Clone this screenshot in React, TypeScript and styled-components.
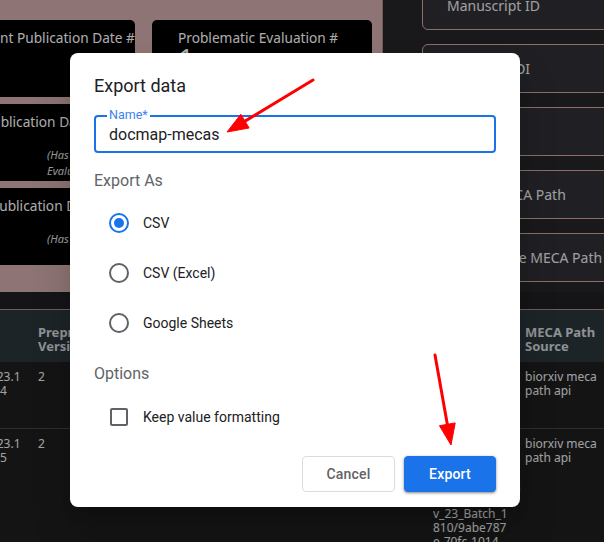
import React from 'react'
import styled, { createGlobalStyle } from 'styled-components'

const GlobalStyle = createGlobalStyle`
  html, body {
    margin: 0;
    padding: 0;
    background: #1e1e20;
  }
  body {
    font-family: 'Noto Sans', 'Open Sans', sans-serif;
    overflow: hidden;
  }
`

const Page = styled.div`
  position: relative;
  width: 604px;
  height: 542px;
  overflow: hidden;
  background: #1e1e20;
`

const Top = styled.div`
  display: flex;
  height: 292px;
`

const CardPanel = styled.div`
  flex: 0 0 457px;
  margin-left: -75px;
  box-sizing: border-box;
  padding: 20px 10px 0;
  background: #d1abab;
  display: grid;
  grid-template-columns: 200px 220px;
  grid-auto-rows: 77px;
  gap: 7px 17px;
`

const Card = styled.div`
  background: #000;
  border-radius: 5px;
  padding: 8px 26px 0;
  overflow: hidden;
  color: #fff;
`

const CardTitle = styled.div`
  font-size: 13.7px;
  line-height: 19px;
  white-space: nowrap;
`

const CardBody = styled.div`
  display: grid;
  grid-template-columns: 86px 1fr;
`

const CardValue = styled.div`
  font-size: 28px;
  line-height: 28px;
  margin-top: -3px;
`

const CardNote = styled.div`
  align-self: center;
  padding-top: 16px;
  font-size: 11px;
  line-height: 16px;
  font-style: italic;
  color: #e0e0e0;
`

const FieldPanel = styled.div`
  flex: 1;
  background: #262629;
  border-left: 1px solid #a2897f;
  padding-left: 39px;
  display: flex;
  flex-direction: column;
  gap: 14px;
`

const FieldBox = styled.div`
  flex: 0 0 49px;
  box-sizing: border-box;
  margin-right: -20px;
  border: 1px solid #cfa396;
  border-radius: 6px;
  background: #2e2f35;
  display: flex;
  align-items: center;
  padding-left: 24px;
  font-size: 14px;
  color: #ebebeb;
  white-space: nowrap;
  &:first-child {
    margin-top: -19px;
  }
`

const TableWrap = styled.div`
  padding-top: 17px;
  background: #202023;
`

const Grid = styled.div`
  display: grid;
  grid-template-columns: 55px 80px 315px 92px 1fr;
  margin-left: -17px;
`

const HeaderRow = styled(Grid)`
  height: 53px;
  box-sizing: border-box;
  align-items: center;
  background: #2b353a;
  border-top: 1px solid #a2897f;
  font-size: 13px;
  font-weight: 700;
  line-height: 14px;
  color: #d1d8dd;
`

const BodyRow = styled(Grid)`
  min-height: 66px;
  align-items: start;
  background: #1e1e20;
  border-bottom: 1px solid #444447;
  font-size: 12px;
  line-height: 14px;
  color: #eeeeee;
`

const Cell = styled.div`
  padding: 8px 8px 2px 0;
  overflow: hidden;
`

const Line = styled.span`
  display: block;
  white-space: nowrap;
`

const Backdrop = styled.div`
  position: absolute;
  inset: 0;
  background: rgba(0, 0, 0, 0.32);
`

const Dialog = styled.div`
  position: absolute;
  left: 70px;
  top: 53px;
  width: 450px;
  box-sizing: border-box;
  padding: 21px 24px 15px;
  background: #fff;
  border-radius: 8px;
  box-shadow: 0 11px 15px -7px rgba(0, 0, 0, 0.2), 0 24px 38px 3px rgba(0, 0, 0, 0.14);
  font-family: Roboto, 'Noto Sans', sans-serif;
  color: #202124;
`

const DialogTitle = styled.div`
  font-size: 18px;
  line-height: 24px;
`

const NameField = styled.div`
  position: relative;
  margin-top: 17px;
  height: 38px;
  box-sizing: border-box;
  border: 2px solid #1a73e8;
  border-radius: 4px;
  padding: 0 13px;
  display: flex;
  align-items: center;
  font-size: 16px;
`

const FloatLabel = styled.span`
  position: absolute;
  left: 11px;
  top: -9px;
  padding: 0 2px;
  background: #fff;
  font-size: 12.5px;
  line-height: 14px;
  color: #3b82f0;
`

const SectionLabel = styled.div<{ $gap: number }>`
  margin-top: ${p => p.$gap}px;
  font-size: 16px;
  line-height: 24px;
  color: #5f6368;
`

const OptionList = styled.div<{ $gap: number }>`
  margin-top: ${p => p.$gap}px;
  display: flex;
  flex-direction: column;
`

const OptionRow = styled.label`
  height: 50px;
  display: flex;
  align-items: center;
  gap: 14px;
  padding-left: 15px;
  font-size: 14px;
`

const Radio = styled.span<{ $checked?: boolean }>`
  width: 20px;
  height: 20px;
  box-sizing: border-box;
  border: 2px solid ${p => (p.$checked ? '#1a73e8' : '#5f6368')};
  border-radius: 50%;
  display: grid;
  place-items: center;
  &::after {
    content: '';
    width: 10px;
    height: 10px;
    border-radius: 50%;
    background: ${p => (p.$checked ? '#1a73e8' : 'transparent')};
  }
`

const Checkbox = styled.span`
  width: 18px;
  height: 18px;
  margin-left: 1px;
  margin-right: 1px;
  box-sizing: border-box;
  border: 2px solid #5f6368;
  border-radius: 2px;
`

const Actions = styled.div`
  margin-top: 14px;
  display: flex;
  justify-content: flex-end;
  gap: 9px;
`

const Button = styled.button<{ $primary?: boolean; $w: number }>`
  width: ${p => p.$w}px;
  height: 36px;
  border-radius: 4px;
  border: 1px solid ${p => (p.$primary ? '#1a73e8' : '#dadce0')};
  background: ${p => (p.$primary ? '#1a73e8' : '#fff')};
  color: ${p => (p.$primary ? '#fff' : '#5f6368')};
  box-shadow: ${p => (p.$primary ? '0 1px 2px rgba(0,0,0,0.3), 0 1px 3px 1px rgba(0,0,0,0.15)' : 'none')};
  font-family: Roboto, sans-serif;
  font-size: 14px;
  font-weight: 500;
  letter-spacing: 0.2px;
`

const Annotations = styled.svg`
  position: absolute;
  left: 0;
  top: 0;
  pointer-events: none;
`

const cards = [
  { title: 'Preprint Publication Date #', value: '3', note: '' },
  { title: 'Problematic Evaluation #', value: '1', note: '' },
  { title: '1st Publication Date', value: '', note: '(Has Evaluation)' },
  { title: 'Evaluation Date', value: '', note: '' },
  { title: 'Last Publication Date', value: '', note: '(Has DOI)' },
  { title: 'Evaluation Count', value: '', note: '' },
]

const fields = ['Manuscript ID', 'Preprint DOI', 'Version', 'Stored MECA Path', 'Final Source MECA Path']

const rows = [
  {
    date: ['2023.1', '1.14'],
    version: '2',
    path: ['s3://transfers-', 'elife/biorxiv_', 'Current_Conte', 'nt/Nov_23/'],
  },
  {
    date: ['2023.1', '1.15'],
    version: '2',
    path: [
      's3://transfers-',
      'elife/biorxiv_',
      'Current_Conte',
      'nt/November_2',
      '023/15_No',
      'v_23_Batch_1',
      '810/9abe787',
      'e-70fc-1014-',
      'b5a3-b1f6a',
    ],
  },
]

const options = ['CSV', 'CSV (Excel)', 'Google Sheets']

const Arrow = ({ from, to }: { from: [number, number]; to: [number, number] }) => {
  const dx = to[0] - from[0]
  const dy = to[1] - from[1]
  const len = Math.hypot(dx, dy)
  const ux = dx / len
  const uy = dy / len
  const bx = to[0] - ux * 21
  const by = to[1] - uy * 21
  const px = -uy * 8
  const py = ux * 8
  return (
    <g fill='#ff0000' stroke='#ff0000'>
      <line x1={from[0]} y1={from[1]} x2={bx} y2={by} strokeWidth='3' strokeLinecap='round' />
      <polygon points={`${to[0]},${to[1]} ${bx + px},${by + py} ${bx - px},${by - py}`} strokeWidth='1' />
    </g>
  )
}

const App = () => {
  return (
    <Page>
      <GlobalStyle />
      <Top>
        <CardPanel>
          {cards.map(c => (
            <Card key={c.title}>
              <CardTitle>{c.title}</CardTitle>
              <CardBody>
                <CardValue>{c.value}</CardValue>
                {c.note && <CardNote>{c.note}</CardNote>}
              </CardBody>
            </Card>
          ))}
        </CardPanel>
        <FieldPanel>
          {fields.map(f => (
            <FieldBox key={f}>{f}</FieldBox>
          ))}
        </FieldPanel>
      </Top>
      <TableWrap>
        <HeaderRow>
          <Cell />
          <Cell>
            <Line>Preprint</Line>
            <Line>Version</Line>
          </Cell>
          <Cell>Evaluation</Cell>
          <Cell>MECA Path</Cell>
          <Cell>
            <Line>MECA Path</Line>
            <Line>Source</Line>
          </Cell>
        </HeaderRow>
        {rows.map(r => (
          <BodyRow key={r.date.join('')}>
            <Cell>
              {r.date.map(d => (
                <Line key={d}>{d}</Line>
              ))}
            </Cell>
            <Cell>{r.version}</Cell>
            <Cell />
            <Cell>
              {r.path.map(p => (
                <Line key={p}>{p}</Line>
              ))}
            </Cell>
            <Cell>
              <Line>biorxiv meca</Line>
              <Line>path api</Line>
            </Cell>
          </BodyRow>
        ))}
      </TableWrap>

      <Backdrop />

      <Dialog>
        <DialogTitle>Export data</DialogTitle>
        <NameField>
          <FloatLabel>Name*</FloatLabel>
          docmap-mecas
        </NameField>
        <SectionLabel $gap={16}>Export As</SectionLabel>
        <OptionList $gap={5}>
          {options.map((o, i) => (
            <OptionRow key={o}>
              <Radio $checked={i === 0} />
              {o}
            </OptionRow>
          ))}
        </OptionList>
        <SectionLabel $gap={14}>Options</SectionLabel>
        <OptionList $gap={6}>
          <OptionRow>
            <Checkbox />
            Keep value formatting
          </OptionRow>
        </OptionList>
        <Actions>
          <Button $w={93}>Cancel</Button>
          <Button $primary $w={92}>
            Export
          </Button>
        </Actions>
      </Dialog>

      <Annotations width='604' height='542' viewBox='0 0 604 542'>
        <Arrow from={[313, 80]} to={[227, 132]} />
        <Arrow from={[435, 355]} to={[451, 445]} />
      </Annotations>
    </Page>
  )
}

export default App
